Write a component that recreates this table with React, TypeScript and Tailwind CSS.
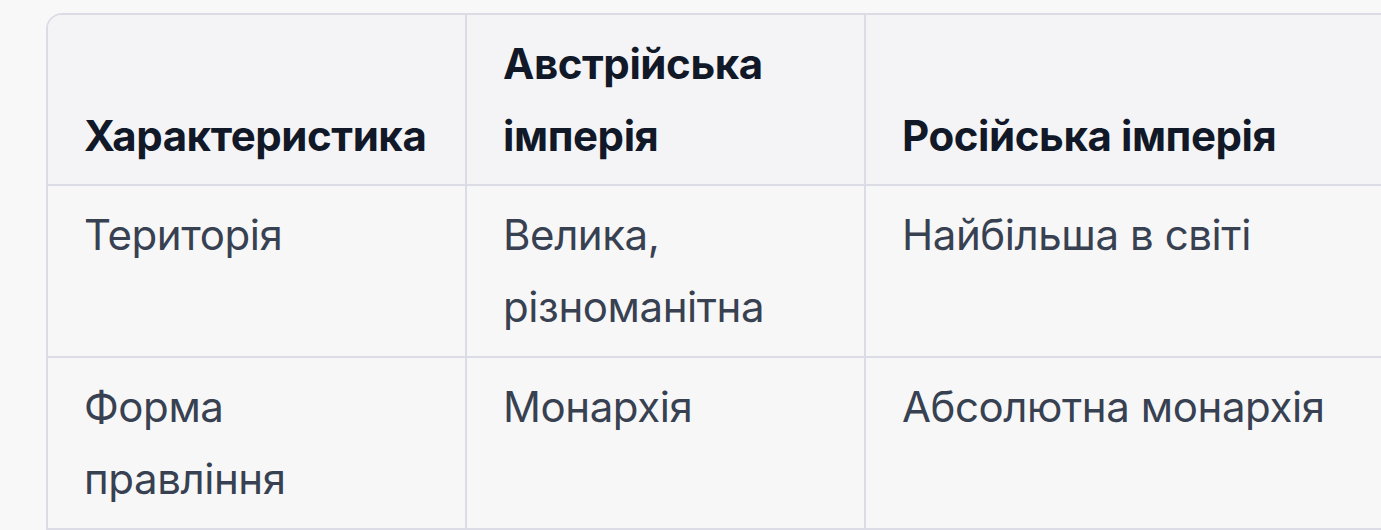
import React from 'react'

interface Row {
  feature: string
  austria: string
  russia: string
}

const rows: Row[] = [
  { feature: 'Територія', austria: 'Велика, різноманітна', russia: 'Найбільша в світі' },
  { feature: 'Форма правління', austria: 'Монархія', russia: 'Абсолютна монархія' },
]

const thCls =
  'border-r-2 border-[#dcdce6] pl-[36px] pr-[38px] pt-[13px] pb-[12px] text-left align-bottom font-bold text-[#111827]'
const tdCls = 'border-r-2 border-t-2 border-[#dcdce6] pl-[36px] pr-[38px] py-[13px] align-top text-[#374151]'

const App = () => {
  return (
    <div className="h-[530px] w-[1381px] overflow-hidden bg-[#f8f8f9] pl-[46px] pt-[13px] font-['Inter',sans-serif]">
      <div className="w-[1420px] overflow-hidden rounded-2xl border-2 border-[#dcdce6]">
        <table className="w-[1417px] table-fixed border-collapse text-[42px] leading-[72px] tracking-[-0.01em]">
          <colgroup>
            <col className="w-[418px]" />
            <col className="w-[399px]" />
            <col className="w-[600px]" />
          </colgroup>
          <thead className="bg-[#f4f4f7]">
            <tr>
              <th className={thCls}>Характеристика</th>
              <th className={thCls}>
                Австрійська
                <br />
                імперія
              </th>
              <th className={thCls}>Російська імперія</th>
            </tr>
          </thead>
          <tbody className="bg-[#f7f7f7]">
            {rows.map((row) => (
              <tr key={row.feature}>
                <td className={tdCls}>
                  <span className="block w-[300px]">{row.feature}</span>
                </td>
                <td className={tdCls}>
                  <span className="block w-[300px]">{row.austria}</span>
                </td>
                <td className={tdCls}>{row.russia}</td>
              </tr>
            ))}
            <tr>
              <td className={tdCls}>&nbsp;</td>
              <td className={tdCls}>&nbsp;</td>
              <td className={tdCls}>&nbsp;</td>
            </tr>
          </tbody>
        </table>
      </div>
    </div>
  )
}

export default App
